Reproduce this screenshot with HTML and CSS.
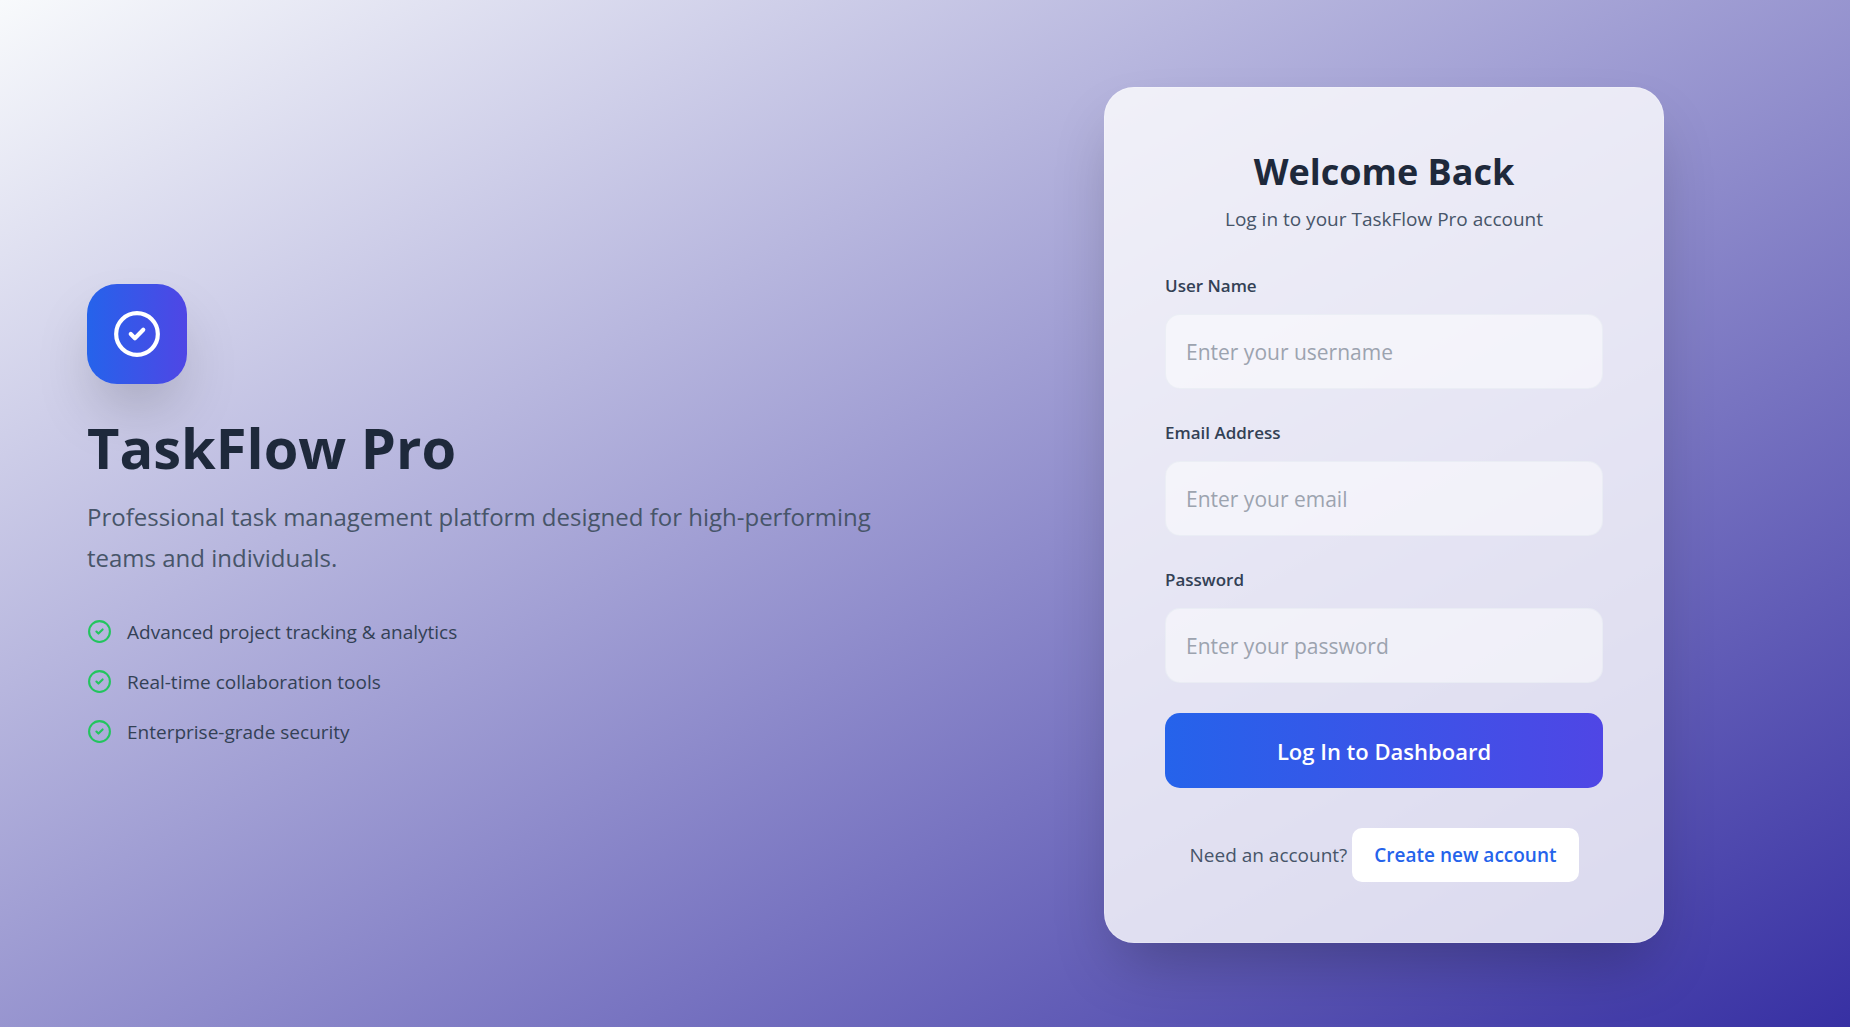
FILE: index.html
```html
<!DOCTYPE html>
<html lang="en">
<head>
<meta charset="utf-8">
<meta name="viewport" content="width=device-width, initial-scale=1">
<title>TaskFlow Pro - Log in</title>
<link rel="stylesheet" href="styles.css">
</head>
<body>
<svg class="sprite">
  <symbol id="check-circle" viewBox="0 0 24 24">
    <circle cx="12" cy="12" r="10"/>
    <path d="m9 12 2 2 4-4"/>
  </symbol>
</svg>
<main class="page">
  <section class="intro">
    <div class="logo"><svg class="icon icon-large" aria-hidden="true"><use href="#check-circle"/></svg></div>
    <h1 class="brand">TaskFlow Pro</h1>
    <p class="tagline">Professional task management platform designed for high-performing teams and individuals.</p>
    <ul class="features">
      <li class="feature"><svg class="icon icon-small" aria-hidden="true"><use href="#check-circle"/></svg><span>Advanced project tracking &amp; analytics</span></li>
      <li class="feature"><svg class="icon icon-small" aria-hidden="true"><use href="#check-circle"/></svg><span>Real-time collaboration tools</span></li>
      <li class="feature"><svg class="icon icon-small" aria-hidden="true"><use href="#check-circle"/></svg><span>Enterprise-grade security</span></li>
    </ul>
  </section>
  <section class="login">
    <div class="card">
      <header class="card-header">
        <h2 class="card-title">Welcome Back</h2>
        <p class="card-subtitle">Log in to your TaskFlow Pro account</p>
      </header>
      <form class="form">
        <div class="field">
          <label class="label" for="username">User Name</label>
          <input class="input" id="username" type="text" placeholder="Enter your username">
        </div>
        <div class="field">
          <label class="label" for="email">Email Address</label>
          <input class="input" id="email" type="email" placeholder="Enter your email">
        </div>
        <div class="field">
          <label class="label" for="password">Password</label>
          <input class="input" id="password" type="password" placeholder="Enter your password">
        </div>
        <button class="submit" type="submit">Log In to Dashboard</button>
      </form>
      <footer class="signup">
        <span>Need an account?</span>
        <a class="signup-link" href="#signup">Create new account</a>
      </footer>
    </div>
  </section>
</main>
</body>
</html>
```
FILE: styles.css
```css
*, *::before, *::after { box-sizing: border-box; }

body {
  margin: 0;
  font-family: "Segoe UI", "Open Sans", "Noto Sans", sans-serif;
  font-size: 19px;
  line-height: 30px;
  color: #475569;
}

h1, h2, p, ul { margin: 0; padding: 0; }

.sprite { display: none; }

.page {
  min-height: 100vh;
  display: grid;
  grid-template-columns: 1fr 1fr;
  align-items: center;
  padding: 43px 7px 40px;
  background: linear-gradient(to bottom right, #f8fafc, #3730a3);
}

.intro { padding: 0 20px 0 80px; }

.logo {
  display: flex;
  align-items: center;
  justify-content: center;
  width: 100px;
  height: 100px;
  margin-bottom: 32px;
  border-radius: 30px;
  background: linear-gradient(to right, #2563eb, #4f46e5);
  box-shadow: 0 31px 62px -15px rgba(0, 0, 0, 0.25);
  color: #fff;
}

.icon {
  flex: none;
  fill: none;
  stroke: currentColor;
  stroke-width: 2;
  stroke-linecap: round;
  stroke-linejoin: round;
}
.icon-large { width: 50px; height: 50px; }
.icon-small { width: 25px; height: 25px; color: #22c55e; }

.brand {
  margin-bottom: 18px;
  font-size: 56px;
  line-height: 62px;
  font-weight: 700;
  color: #1e293b;
}

.tagline {
  margin-bottom: 39px;
  font-size: 24px;
  line-height: 41px;
}

.features {
  display: grid;
  gap: 20px;
  list-style: none;
  color: #334155;
}
.feature { display: flex; align-items: center; gap: 15px; }

.login { display: flex; justify-content: center; }

.card {
  width: 100%;
  max-width: 560px;
  padding: 60px;
  border: 1px solid rgba(255, 255, 255, 0.2);
  border-radius: 30px;
  background: rgba(255, 255, 255, 0.8);
  box-shadow: 0 31px 62px -15px rgba(0, 0, 0, 0.25);
}

.card-header { margin-bottom: 38px; text-align: center; }
.card-title {
  margin-bottom: 8px;
  font-size: 36px;
  line-height: 48px;
  font-weight: 700;
  color: #1e293b;
}

.form { display: grid; gap: 30px; }
.field { display: grid; gap: 15px; }
.label {
  font-size: 17px;
  line-height: 27px;
  font-weight: 600;
  color: #334155;
}
.input {
  width: 100%;
  height: 75px;
  padding: 0 20px;
  border: 1px solid rgba(226, 232, 240, 0.5);
  border-radius: 15px;
  background: rgba(255, 255, 255, 0.5);
  font: inherit;
  font-size: 21px;
  color: #1e293b;
}
.input::placeholder { color: #9ca3af; opacity: 1; }

.submit {
  height: 75px;
  border: 0;
  border-radius: 15px;
  background: linear-gradient(to right, #2563eb, #4f46e5);
  font: inherit;
  font-size: 22px;
  font-weight: 600;
  color: #fff;
  cursor: pointer;
}

.signup {
  display: flex;
  align-items: center;
  justify-content: center;
  gap: 5px;
  margin-top: 40px;
}
.signup-link {
  padding: 12px 22px;
  border-radius: 10px;
  background: #fff;
  font-weight: 600;
  color: #2563eb;
  text-decoration: none;
}
```
